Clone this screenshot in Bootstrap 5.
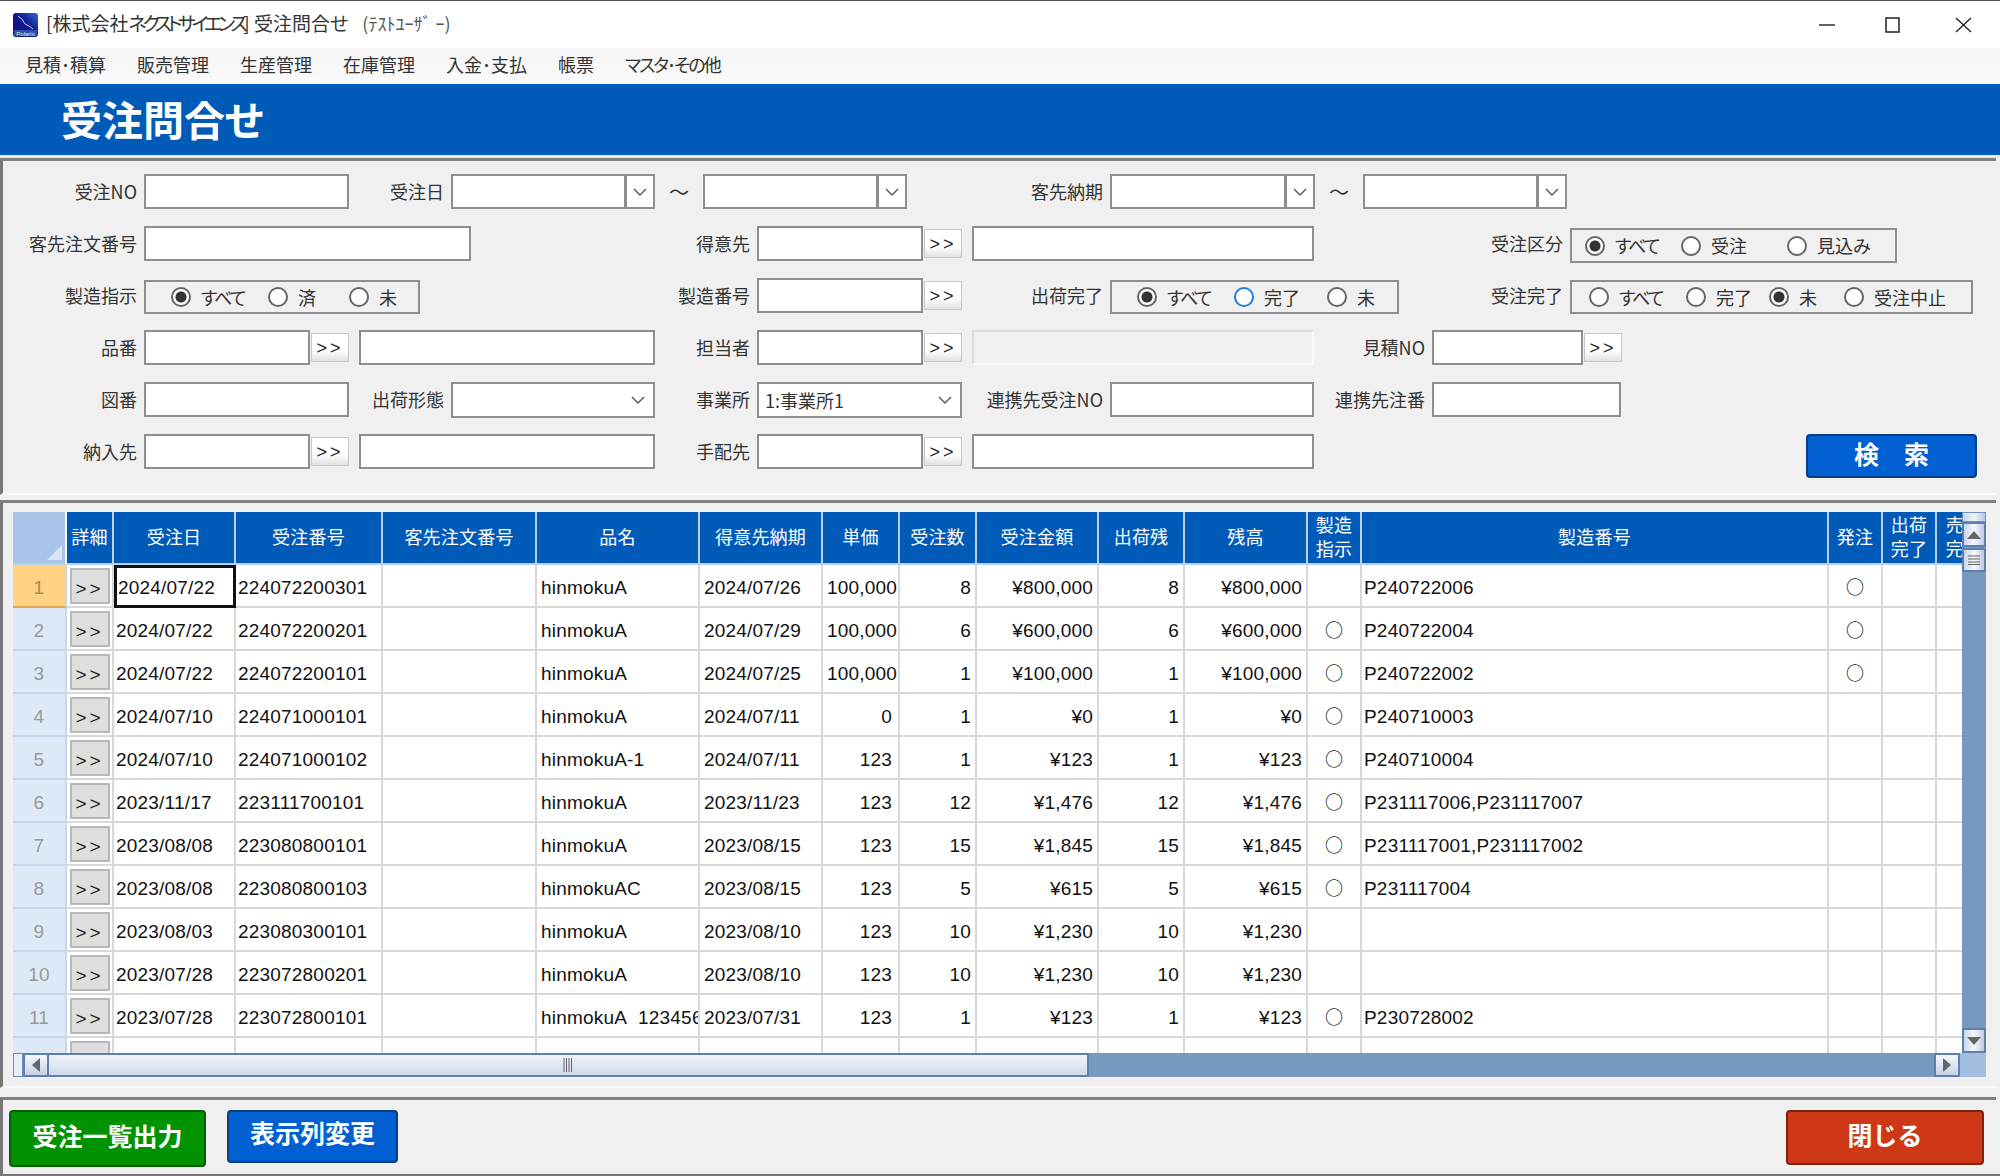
<!DOCTYPE html>
<html lang="ja">
<head>
<meta charset="utf-8">
<title>受注問合せ</title>
<link href="https://cdn.jsdelivr.net/npm/bootstrap@5.3.0/dist/css/bootstrap.min.css" rel="stylesheet">
<style>
html,body{height:100%;margin:0;overflow:hidden}
body{background:#f0f0f0;font-family:"Noto Sans CJK JP","Liberation Sans",sans-serif;color:#222;font-size:18px;font-feature-settings:"palt"}
.app-win{height:1176px;display:flex;flex-direction:column;border-top:1px solid #555;border-bottom:2px solid #777}
.title-row{height:47px;background:#fff;display:flex;align-items:center;padding:0 0 0 13px;flex:none}
.title-text{margin:0 0 4px 8px;font-size:19px;color:#333;white-space:nowrap;line-height:1}
.title-kana{letter-spacing:-4.2px}
.title-user{font-size:18px;margin-left:14px;font-feature-settings:normal;color:#555}
.win-ctl{margin-left:auto;display:flex;align-items:center;padding-right:28px}
.win-min{margin-right:50px}.win-max{margin-right:55px}
.menu-row{height:36px;background:linear-gradient(#f4f4f4,#fbfbfb);flex:none;padding:0 0 5px 25px;gap:31px;align-items:center}
.menu-row .nav-link{padding:0;color:#333;font-size:18px;line-height:1}
.menu-row .nav-link.menu-tight{letter-spacing:-2px}
.head-band{height:71px;background:#005bb8;color:#fff;flex:none;display:flex;align-items:center;padding:0 0 3px 61px;font-size:41px;font-weight:700;line-height:1}
.band-gap{height:3px;background:#e8e8e8;flex:none}
.search-pane{border-top:3px solid #808080;border-left:3px solid #777;margin-right:4px;padding-top:13px;height:337px;border-bottom:2px solid #fafafa;flex:none}
.fline{display:flex;align-items:flex-start;height:35px;margin-bottom:17px}
.cap{box-sizing:content-box;flex:none;text-align:right;padding-right:7px;line-height:35px;white-space:nowrap;color:#333;font-size:18px}
.fbox.form-control,.fbox{flex:none;height:35px;border:2px solid #8e8e8e;border-radius:0;background:#fff;padding:0 6px;font-size:18px;box-shadow:none}
.fbox.is-off{background:#f0f0f0;border:2px solid #dcdcdc;border-bottom-color:#fafafa;border-right-color:#fafafa}
.combo{flex:none;flex-wrap:nowrap}
.combo .form-control{height:35px;border:2px solid #8e8e8e;border-radius:0;padding:0 6px}
.combo .input-group-text{width:30px;height:35px;padding:0;justify-content:center;background:#fff;border:2px solid #8e8e8e;border-radius:0}
.fpick.form-select{flex:none;height:36px;border:2px solid #8e8e8e;border-radius:0;padding:0 6px;font-size:18px;color:#333;background-size:14px 8px;background-position:right 8px center;background-image:url("data:image/svg+xml,%3Csvg xmlns='http://www.w3.org/2000/svg' viewBox='0 0 14 8'%3E%3Cpath d='M1 1l6 6 6-6' fill='none' stroke='%23555' stroke-width='1.4'/%3E%3C/svg%3E")}
.more-btn.btn{flex:none;width:38px;height:29px;margin:3px 10px 0 1px;padding:0;border:1px solid #c8c8c8;border-radius:0;background:linear-gradient(#fff,#fff 60%,#e2e2e2);font:18px/1 "Liberation Sans",sans-serif;letter-spacing:3px;color:#222}
.more-end.btn{margin-right:0}
.tilde{flex:none;width:48px;text-align:center;line-height:35px;font-size:20px;color:#333}
.rbox{flex:none;height:34px;border:2px solid #8e8e8e;display:flex;align-items:center;background:#f0f0f0;margin-top:2px;font-size:18px;color:#333;white-space:nowrap}
.rbox-low{height:35px;margin-top:2px}
.ritem{display:flex;align-items:center;gap:10px;flex:none}
.ritem .form-check-input{width:20px;height:20px;margin:0;border:2px solid #666;background-color:#fff;flex:none;background-image:none;box-shadow:none}
.ritem .form-check-input:checked{background-color:#fff;background-image:radial-gradient(circle,#333 0,#333 5px,#fff 6px);border-color:#666}
.ritem .is-focus.form-check-input{border-color:#1f7fdc}
.kana-fit{letter-spacing:-2px}
.go-btn.btn{flex:none;width:171px;height:44px;background:#0060d2;color:#fff;border:2px solid #0d3f80;border-radius:4px;font-size:25px;font-weight:700;padding:0 0 5px;line-height:1}
.grid-pane{border-top:3px solid #808080;border-left:3px solid #777;margin-top:5px;margin-right:4px;padding:9px 10px 0 10px;height:588px;flex:none;border-bottom:2px solid #fafafa}
.grid-top{display:flex;height:541px}
.grid-clip{width:1949px;overflow:hidden;flex:none;background:#fff}
.odr-table{table-layout:fixed;border-collapse:separate;border-spacing:0;width:1980px;font:19px/1 "Liberation Sans",sans-serif;letter-spacing:.2px;color:#111;margin:0}
.odr-table th{background:#005bb8;color:#fff;font:400 18px/24px "Noto Sans CJK JP",sans-serif;text-align:center;height:53px;padding:0 0 3px;border-right:2px solid #b8d0ec;border-bottom:2px solid #b8d0ec;white-space:nowrap;overflow:hidden;vertical-align:middle}
.odr-table th.corner{background:#a8c4e8;position:relative;border-right:2px solid #fff}
.corner-mark{position:absolute;right:3px;bottom:3px;width:0;height:0;border-left:15px solid transparent;border-bottom:15px solid #d8e6f6}
.odr-table td{height:43px;padding:3px 4px 0;border-right:2px solid #d8d8d8;border-bottom:2px solid #d8d8d8;white-space:nowrap;overflow:hidden;vertical-align:middle;background:#fff}
.odr-table td:nth-child(3),.odr-table td:nth-child(4),.odr-table td:nth-child(14){padding-left:2px}
.odr-table td:nth-child(n+8):nth-child(-n+12){text-align:right}
.odr-table td:nth-child(8){padding-right:6px}
.odr-table td:nth-child(13),.odr-table td:nth-child(15){text-align:center;font-family:"Noto Sans CJK JP",sans-serif;font-size:18px;font-feature-settings:normal;padding:0}
.odr-table td.row-no{background:#dee9f7;color:#999;text-align:center;border-color:#c6d6ec;padding:3px 0 0}
.odr-table td.row-on{background:#ffd183;color:#a88a5c;border-bottom-color:#e0a850}
.odr-table td.cell-on{border:3px solid #111;padding:1px 1px 0}
.odr-table td.det-cell{padding:0}
.det-btn.btn{display:block;width:40px;height:36px;margin:0 auto;padding:5px 0 0;border:2px solid #b8b8b8;border-radius:0;background:#dedede;color:#222;font:19px/1 "Liberation Sans",sans-serif;letter-spacing:3px}
.vscroll{width:24px;background:#7799c0;flex:none;display:flex;flex-direction:column}
.sb-cap{height:10px;background:linear-gradient(90deg,#c4d4ea,#eef3fa,#b4c8e2);border:1px solid #6f8fb8;flex:none}
.sb-arrow{height:25px;flex:none;background:linear-gradient(90deg,#c8d6ea,#f6f8fc,#b9cbe4);border:2px solid #5f80ac;display:flex;align-items:center;justify-content:center}
.sb-thumb{height:24px;margin-top:1px;flex:none;background:linear-gradient(90deg,#c8d6ea,#f6f8fc,#b9cbe4);border:2px solid #5f80ac;display:flex;align-items:center;justify-content:center}
.sb-fill{flex:1}
.hscroll{height:24px;display:flex;background:#7799c0}
.hs-cap{width:10px;flex:none;background:#e8eef7;border:1px solid #6f8fb8}
.hs-arrow{width:26px;flex:none;background:linear-gradient(#f6f8fc,#c4d2e6);border:2px solid #5f80ac;display:flex;align-items:center;justify-content:center}
.hs-thumb{width:1040px;flex:none;background:linear-gradient(#eff3f9,#cfdbea);border:2px solid #5f80ac;border-left:0;display:flex;align-items:center;justify-content:center}
.hs-corner{width:26px;flex:none;background:#a4bee0}
.foot-pane{border-top:3px solid #808080;border-left:3px solid #777;margin-top:9px;margin-right:4px;padding:10px 12px 0 6px;flex:1;display:flex;align-items:flex-start}
.foot-btn.btn{height:57px;border-radius:4px;color:#fff;font-size:25px;font-weight:700;padding:0 0 7px;line-height:1;border:2px solid}
.foot-green.btn{width:197px;background:#009200;border-color:#0b5c0b}
.foot-blue.btn{width:171px;height:53px;margin-left:21px;background:#0060d2;border-color:#0d3f80;padding-bottom:9px}
.foot-red.btn{width:198px;height:55px;margin-left:auto;background:#cf3816;border-color:#7a2410;padding-bottom:6px}
.wd134{width:134px}.wd95{width:95px}.wd111{width:111px}.wd141{width:141px}.wd164{width:164px}.wd196{width:196px}.wd249{width:249px}.wd279{width:279px}.wd330{width:330px}
.wd151{width:151px}.wd166{width:166px}.wd189{width:189px}.wd204{width:204px}.wd205{width:205px}.wd276{width:276px}.wd289{width:289px}.wd296{width:296px}.wd327{width:327px}.wd342{width:342px}.wd403{width:403px}
.pl13{padding-left:13px}.pl17{padding-left:17px}.pl25{padding-left:25px}
.rw75{width:75px}.rw81{width:81px}.rw83{width:83px}.rw93{width:93px}.rw96{width:96px}.rw97{width:97px}.rw106{width:106px}
.gap492{flex:none;width:492px}
</style>
</head>
<body>
<div class="app-win">
  <div class="title-row">
    <svg width="25" height="24" viewBox="0 0 25 24"><defs><linearGradient id="logoFill" x1="0" y1="1" x2="1" y2="0"><stop offset="0" stop-color="#10107a"/><stop offset=".55" stop-color="#14188c"/><stop offset="1" stop-color="#2f68d8"/></linearGradient></defs><rect width="25" height="24" rx="3" fill="url(#logoFill)"/><path d="M5 3l4 3 3 5 4 2 4 3" fill="none" stroke="#b8ccf4" stroke-width="1"/><rect x="1" y="17" width="23" height="6" rx="1" fill="#2d4fb0"/><text x="12.5" y="22.500" font-size="6" text-anchor="middle" fill="#f0e8b0" font-family="Liberation Sans">Polaris</text></svg>
    <div class="title-text">[株式会社<span class="title-kana">ネクストサイエンス</span>] 受注問合せ<span class="title-user">(ﾃｽﾄﾕｰｻﾞ ｰ)</span></div>
    <div class="win-ctl">
      <svg class="win-min" width="16" height="16" viewBox="0 0 16 16"><path d="M0 8h16" stroke="#222" stroke-width="1.4"/></svg>
      <svg class="win-max" width="15" height="16" viewBox="0 0 15 16"><rect x="1" y="1" width="13" height="14" fill="none" stroke="#222" stroke-width="1.5"/></svg>
      <svg width="17" height="16" viewBox="0 0 17 16"><path d="M1 1l15 14M16 1L1 15" fill="none" stroke="#222" stroke-width="1.4"/></svg>
    </div>
  </div>
  <nav class="nav menu-row">
    <a class="nav-link" href="#">見積･積算</a>
    <a class="nav-link" href="#">販売管理</a>
    <a class="nav-link" href="#">生産管理</a>
    <a class="nav-link" href="#">在庫管理</a>
    <a class="nav-link" href="#">入金･支払</a>
    <a class="nav-link" href="#">帳票</a>
    <a class="nav-link menu-tight" href="#">マスタ･その他</a>
  </nav>
  <div class="head-band">受注問合せ</div>
  <div class="band-gap"></div>

  <form class="search-pane">
    <div class="fline">
      <label class="cap wd134">受注NO</label><input class="form-control fbox wd205">
      <label class="cap wd95">受注日</label>
      <div class="input-group combo wd204"><input class="form-control"><span class="input-group-text"><svg width="14" height="8" viewBox="0 0 14 8"><path d="M1 1l6 6 6-6" fill="none" stroke="#555" stroke-width="1.4"/></svg></span></div>
      <span class="tilde">～</span>
      <div class="input-group combo wd204"><input class="form-control"><span class="input-group-text"><svg width="14" height="8" viewBox="0 0 14 8"><path d="M1 1l6 6 6-6" fill="none" stroke="#555" stroke-width="1.4"/></svg></span></div>
      <label class="cap wd196">客先納期</label>
      <div class="input-group combo wd205"><input class="form-control"><span class="input-group-text"><svg width="14" height="8" viewBox="0 0 14 8"><path d="M1 1l6 6 6-6" fill="none" stroke="#555" stroke-width="1.4"/></svg></span></div>
      <span class="tilde">～</span>
      <div class="input-group combo wd204"><input class="form-control"><span class="input-group-text"><svg width="14" height="8" viewBox="0 0 14 8"><path d="M1 1l6 6 6-6" fill="none" stroke="#555" stroke-width="1.4"/></svg></span></div>
    </div>
    <div class="fline">
      <label class="cap wd134">客先注文番号</label><input class="form-control fbox wd327">
      <label class="cap wd279">得意先</label><input class="form-control fbox wd166"><button type="button" class="btn more-btn">&gt;&gt;</button><input class="form-control fbox wd342">
      <label class="cap wd249">受注区分</label>
      <div class="rbox rbox-low wd327 pl13">
        <label class="ritem rw96"><input class="form-check-input" type="radio" name="kubun" checked><span class="kana-fit">すべて</span></label>
        <label class="ritem rw106"><input class="form-check-input" type="radio" name="kubun">受注</label>
        <label class="ritem"><input class="form-check-input" type="radio" name="kubun">見込み</label>
      </div>
    </div>
    <div class="fline">
      <label class="cap wd134">製造指示</label>
      <div class="rbox wd276 pl25">
        <label class="ritem rw97"><input class="form-check-input" type="radio" name="seizo" checked><span class="kana-fit">すべて</span></label>
        <label class="ritem rw81"><input class="form-check-input" type="radio" name="seizo">済</label>
        <label class="ritem"><input class="form-check-input" type="radio" name="seizo">未</label>
      </div>
      <label class="cap wd330">製造番号</label><input class="form-control fbox wd166"><button type="button" class="btn more-btn more-end">&gt;&gt;</button>
      <label class="cap wd141">出荷完了</label>
      <div class="rbox wd289 pl25">
        <label class="ritem rw97"><input class="form-check-input" type="radio" name="ship" checked><span class="kana-fit">すべて</span></label>
        <label class="ritem rw93"><input class="form-check-input is-focus" type="radio" name="ship">完了</label>
        <label class="ritem"><input class="form-check-input" type="radio" name="ship">未</label>
      </div>
      <label class="cap wd164">受注完了</label>
      <div class="rbox wd403 pl17">
        <label class="ritem rw97"><input class="form-check-input" type="radio" name="done"><span class="kana-fit">すべて</span></label>
        <label class="ritem rw83"><input class="form-check-input" type="radio" name="done">完了</label>
        <label class="ritem rw75"><input class="form-check-input" type="radio" name="done" checked>未</label>
        <label class="ritem"><input class="form-check-input" type="radio" name="done">受注中止</label>
      </div>
    </div>
    <div class="fline">
      <label class="cap wd134">品番</label><input class="form-control fbox wd166"><button type="button" class="btn more-btn">&gt;&gt;</button><input class="form-control fbox wd296">
      <label class="cap wd95">担当者</label><input class="form-control fbox wd166"><button type="button" class="btn more-btn">&gt;&gt;</button><div class="fbox is-off wd342"></div>
      <label class="cap wd111">見積NO</label><input class="form-control fbox wd151"><button type="button" class="btn more-btn more-end">&gt;&gt;</button>
    </div>
    <div class="fline">
      <label class="cap wd134">図番</label><input class="form-control fbox wd205">
      <label class="cap wd95">出荷形態</label><select class="form-select fpick wd204"><option></option></select>
      <label class="cap wd95">事業所</label><select class="form-select fpick wd205"><option>1:事業所1</option></select>
      <label class="cap wd141">連携先受注NO</label><input class="form-control fbox wd204">
      <label class="cap wd111">連携先注番</label><input class="form-control fbox wd189">
    </div>
    <div class="fline">
      <label class="cap wd134">納入先</label><input class="form-control fbox wd166"><button type="button" class="btn more-btn">&gt;&gt;</button><input class="form-control fbox wd296">
      <label class="cap wd95">手配先</label><input class="form-control fbox wd166"><button type="button" class="btn more-btn">&gt;&gt;</button><input class="form-control fbox wd342">
      <span class="gap492"></span><button type="button" class="btn go-btn">検　索</button>
    </div>
  </form>

  <section class="grid-pane">
    <div class="grid-top">
      <div class="grid-clip">
        <table class="odr-table">
          <colgroup><col width="54"><col width="47"><col width="122"><col width="147"><col width="154"><col width="163"><col width="123"><col width="77"><col width="77"><col width="122"><col width="86"><col width="123"><col width="54"><col width="467"><col width="54"><col width="54"><col width="56"></colgroup>
          <thead><tr>
            <th class="corner"><span class="corner-mark"></span></th><th>詳細</th><th>受注日</th><th>受注番号</th><th>客先注文番号</th><th>品名</th><th>得意先納期</th><th>単価</th><th>受注数</th><th>受注金額</th><th>出荷残</th><th>残高</th><th>製造<br>指示</th><th>製造番号</th><th>発注</th><th>出荷<br>完了</th><th>売上<br>完了</th>
          </tr></thead>
          <tbody>
            <tr><td class="row-no row-on">1</td><td class="det-cell"><button class="btn det-btn">&gt;&gt;</button></td><td class="cell-on">2024/07/22</td><td>224072200301</td><td></td><td>hinmokuA</td><td>2024/07/26</td><td>100,000</td><td>8</td><td>¥800,000</td><td>8</td><td>¥800,000</td><td></td><td>P240722006</td><td>○</td><td></td><td></td></tr>
            <tr><td class="row-no">2</td><td class="det-cell"><button class="btn det-btn">&gt;&gt;</button></td><td>2024/07/22</td><td>224072200201</td><td></td><td>hinmokuA</td><td>2024/07/29</td><td>100,000</td><td>6</td><td>¥600,000</td><td>6</td><td>¥600,000</td><td>○</td><td>P240722004</td><td>○</td><td></td><td></td></tr>
            <tr><td class="row-no">3</td><td class="det-cell"><button class="btn det-btn">&gt;&gt;</button></td><td>2024/07/22</td><td>224072200101</td><td></td><td>hinmokuA</td><td>2024/07/25</td><td>100,000</td><td>1</td><td>¥100,000</td><td>1</td><td>¥100,000</td><td>○</td><td>P240722002</td><td>○</td><td></td><td></td></tr>
            <tr><td class="row-no">4</td><td class="det-cell"><button class="btn det-btn">&gt;&gt;</button></td><td>2024/07/10</td><td>224071000101</td><td></td><td>hinmokuA</td><td>2024/07/11</td><td>0</td><td>1</td><td>¥0</td><td>1</td><td>¥0</td><td>○</td><td>P240710003</td><td></td><td></td><td></td></tr>
            <tr><td class="row-no">5</td><td class="det-cell"><button class="btn det-btn">&gt;&gt;</button></td><td>2024/07/10</td><td>224071000102</td><td></td><td>hinmokuA-1</td><td>2024/07/11</td><td>123</td><td>1</td><td>¥123</td><td>1</td><td>¥123</td><td>○</td><td>P240710004</td><td></td><td></td><td></td></tr>
            <tr><td class="row-no">6</td><td class="det-cell"><button class="btn det-btn">&gt;&gt;</button></td><td>2023/11/17</td><td>223111700101</td><td></td><td>hinmokuA</td><td>2023/11/23</td><td>123</td><td>12</td><td>¥1,476</td><td>12</td><td>¥1,476</td><td>○</td><td>P231117006,P231117007</td><td></td><td></td><td></td></tr>
            <tr><td class="row-no">7</td><td class="det-cell"><button class="btn det-btn">&gt;&gt;</button></td><td>2023/08/08</td><td>223080800101</td><td></td><td>hinmokuA</td><td>2023/08/15</td><td>123</td><td>15</td><td>¥1,845</td><td>15</td><td>¥1,845</td><td>○</td><td>P231117001,P231117002</td><td></td><td></td><td></td></tr>
            <tr><td class="row-no">8</td><td class="det-cell"><button class="btn det-btn">&gt;&gt;</button></td><td>2023/08/08</td><td>223080800103</td><td></td><td>hinmokuAC</td><td>2023/08/15</td><td>123</td><td>5</td><td>¥615</td><td>5</td><td>¥615</td><td>○</td><td>P231117004</td><td></td><td></td><td></td></tr>
            <tr><td class="row-no">9</td><td class="det-cell"><button class="btn det-btn">&gt;&gt;</button></td><td>2023/08/03</td><td>223080300101</td><td></td><td>hinmokuA</td><td>2023/08/10</td><td>123</td><td>10</td><td>¥1,230</td><td>10</td><td>¥1,230</td><td></td><td></td><td></td><td></td><td></td></tr>
            <tr><td class="row-no">10</td><td class="det-cell"><button class="btn det-btn">&gt;&gt;</button></td><td>2023/07/28</td><td>223072800201</td><td></td><td>hinmokuA</td><td>2023/08/10</td><td>123</td><td>10</td><td>¥1,230</td><td>10</td><td>¥1,230</td><td></td><td></td><td></td><td></td><td></td></tr>
            <tr><td class="row-no">11</td><td class="det-cell"><button class="btn det-btn">&gt;&gt;</button></td><td>2023/07/28</td><td>223072800101</td><td></td><td>hinmokuA&nbsp; 123456</td><td>2023/07/31</td><td>123</td><td>1</td><td>¥123</td><td>1</td><td>¥123</td><td>○</td><td>P230728002</td><td></td><td></td><td></td></tr>
            <tr><td class="row-no"></td><td class="det-cell"><button class="btn det-btn">&gt;&gt;</button></td><td>2023/07/28</td><td></td><td></td><td>hinmokuA</td><td>2023/07/31</td><td></td><td></td><td></td><td></td><td></td><td></td><td></td><td></td><td></td><td></td></tr>
          </tbody>
        </table>
      </div>
      <div class="vscroll">
        <div class="sb-cap"></div>
        <div class="sb-arrow"><svg width="14" height="8" viewBox="0 0 14 8"><path d="M7 0l7 8H0z" fill="#666"/></svg></div>
        <div class="sb-thumb"><svg width="14" height="10" viewBox="0 0 14 10"><path d="M1 1h12M1 4h12M1 7h12M1 9.500h12" stroke="#666" stroke-width="1"/></svg></div>
        <div class="sb-fill"></div>
        <div class="sb-arrow"><svg width="14" height="8" viewBox="0 0 14 8"><path d="M7 8l7-8H0z" fill="#666"/></svg></div>
      </div>
    </div>
    <div class="hscroll">
      <div class="hs-cap"></div>
      <div class="hs-arrow"><svg width="8" height="14" viewBox="0 0 8 14"><path d="M0 7l8-7v14z" fill="#666"/></svg></div>
      <div class="hs-thumb"><svg width="10" height="14" viewBox="0 0 10 14"><path d="M1 0v14M3.500 0v14M6 0v14M8.500 0v14" stroke="#666" stroke-width="1"/></svg></div>
      <div class="sb-fill"></div>
      <div class="hs-arrow"><svg width="8" height="14" viewBox="0 0 8 14"><path d="M8 7L0 0v14z" fill="#666"/></svg></div>
      <div class="hs-corner"></div>
    </div>
  </section>

  <div class="foot-pane">
    <button type="button" class="btn foot-btn foot-green">受注一覧出力</button>
    <button type="button" class="btn foot-btn foot-blue">表示列変更</button>
    <button type="button" class="btn foot-btn foot-red">閉じる</button>
  </div>
</div>
<script src="https://cdn.jsdelivr.net/npm/bootstrap@5.3.0/dist/js/bootstrap.bundle.min.js"></script>
</body>
</html>
